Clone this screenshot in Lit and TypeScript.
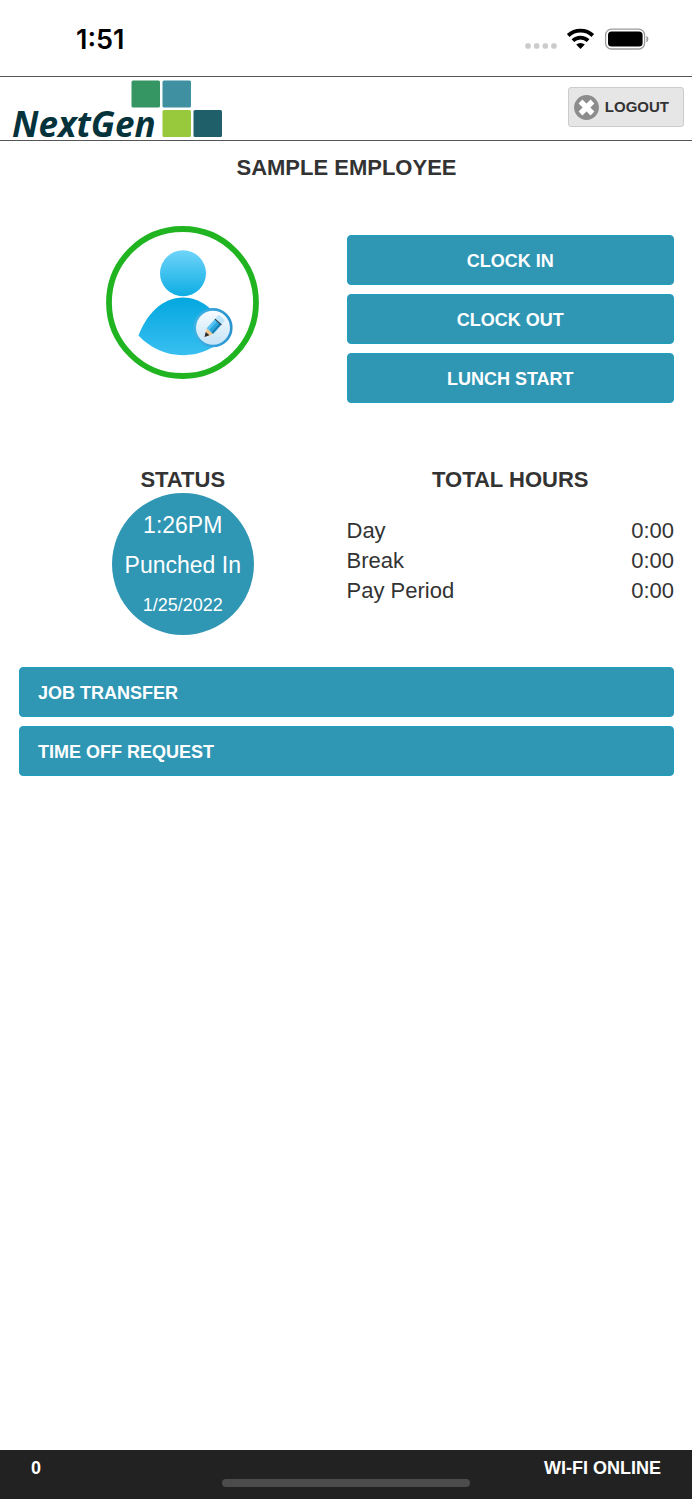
import { LitElement, html, css, svg } from "lit";
import { customElement, property } from "lit/decorators.js";

const COLORS = css`
  :host {
    --teal: #2f96b4;
    --teal-edge: #1f9fbc;
    --ink: #333333;
  }
`;

@customElement("phone-status")
class PhoneStatus extends LitElement {
  static styles = css`
    :host {
      display: flex;
      align-items: center;
      justify-content: space-between;
      height: 76px;
      padding: 0 43px 0 76px;
      box-sizing: border-box;
    }
    .time {
      font: 600 27px/32px Inter, sans-serif;
      color: #000;
      padding-top: 4px;
    }
    .glyphs {
      display: block;
      width: 124px;
      height: 22px;
      padding-top: 2px;
    }
  `;

  render() {
    return html`
      <span class="time">1:51</span>
      <svg class="glyphs" viewBox="0 0 124 22" role="img" aria-label="No signal, Wi-Fi, battery full">
        ${[0, 1, 2, 3].map(
          (i) => svg`<rect x=${0.2 + i * 8.65} y="15.2" width="5.6" height="5.6" rx="2.2" fill="#cbcbcb" />`
        )}
        <g fill="none" stroke="#000" stroke-width="3.8">
          <path d="M43.2 7.5a18 18 0 0 1 24.6 0" />
          <path d="M47.9 12.6a11 11 0 0 1 15.2 0" />
        </g>
        <path d="M51.2 16.6a6.4 6.4 0 0 1 8.6 0L55.5 21z" fill="#000" />
        <rect x="80.6" y="1.2" width="39" height="19.8" rx="5.8" fill="none" stroke="#9b9b9b" stroke-width="1.3" />
        <rect x="83" y="3.6" width="34.6" height="15" rx="3.6" fill="#000" />
        <path d="M121.4 8c2.6.8 2.6 5.4 0 6.2z" fill="#9b9b9b" />
      </svg>
    `;
  }
}

@customElement("brand-bar")
class BrandBar extends LitElement {
  static styles = css`
    :host {
      display: flex;
      align-items: flex-start;
      justify-content: space-between;
      height: 65px;
      box-sizing: border-box;
      border-top: 1px solid #555;
      border-bottom: 1px solid #555;
      padding: 0 8px 0 12px;
    }
    .logo {
      display: flex;
      align-items: flex-end;
      height: 61px;
    }
    .name {
      font: italic 700 35px/36px "Open Sans", "Noto Sans", sans-serif;
      color: #04333c;
      margin-bottom: -4px;
    }
    .tiles {
      display: block;
      width: 92px;
      height: 58px;
      margin-left: -25px;
    }
    .logout {
      display: flex;
      align-items: center;
      gap: 6px;
      height: 40px;
      margin-top: 10px;
      padding: 0 14px 0 5px;
      border: 1px solid #ccc;
      border-radius: 3px;
      background: #e6e6e6;
      color: #333;
      font: 700 15px/20px "Liberation Sans", Arial, sans-serif;
    }
    .cross {
      display: block;
      width: 25px;
      height: 25px;
    }
  `;

  render() {
    return html`
      <div class="logo">
        <span class="name">NextGen</span>
        <svg class="tiles" viewBox="0 0 92 58" aria-hidden="true">
          <rect x="0.5" y="0.5" width="28.5" height="27" rx="1.5" fill="#359664" />
          <rect x="31.5" y="0.5" width="28.5" height="27" rx="1.5" fill="#3f91a1" />
          <rect x="31.5" y="30" width="28.5" height="27" rx="1.5" fill="#98c93c" />
          <rect x="62.5" y="30" width="28.5" height="27" rx="1.5" fill="#1f5f69" />
        </svg>
      </div>
      <button class="logout" type="button">
        <svg class="cross" viewBox="0 0 25 25" aria-hidden="true">
          <circle cx="12.5" cy="12.5" r="12.4" fill="#8c8c8c" />
          <path d="M6.5 6.5l12 12M18.5 6.5l-12 12" stroke="#fff" stroke-width="5.4" />
        </svg>
        LOGOUT
      </button>
    `;
  }
}

@customElement("employee-avatar")
class EmployeeAvatar extends LitElement {
  static styles = css`
    :host {
      display: block;
      width: 153px;
      height: 153px;
    }
    .edit {
      display: block;
      padding: 0;
      border: 0;
      border-radius: 50%;
      background: none;
    }
    .art {
      display: block;
      width: 153px;
      height: 153px;
    }
  `;

  render() {
    return html`
      <button class="edit" type="button" aria-label="Edit profile">
        <svg class="art" viewBox="0 0 153 153">
          <defs>
            <linearGradient id="head" x1="0" y1="0" x2="0" y2="1">
              <stop offset="0" stop-color="#6fd4fa" />
              <stop offset="1" stop-color="#0eade3" />
            </linearGradient>
            <linearGradient id="torso" x1="0" y1="0" x2="0" y2="1">
              <stop offset="0" stop-color="#04a7e0" />
              <stop offset="1" stop-color="#38bff0" />
            </linearGradient>
            <linearGradient id="badge" x1="0" y1="0" x2="0" y2="1">
              <stop offset="0" stop-color="#fafdff" />
              <stop offset="1" stop-color="#c3e2f6" />
            </linearGradient>
            <linearGradient id="ring" x1="0" y1="0" x2="1" y2="0">
              <stop offset="0" stop-color="#3cb2e4" />
              <stop offset="1" stop-color="#2b93cf" />
            </linearGradient>
          </defs>
          <circle cx="76.5" cy="76.5" r="73.5" fill="#fff" stroke="#21b421" stroke-width="5.8" />
          <circle cx="77" cy="47.3" r="23" fill="url(#head)" />
          <path
            d="M32.5 109.5C40 89 56 71.5 77 71.5C98 71.5 114 89 121.5 109.5C110 122 94 129.2 77 129.2C60 129.2 44 122 32.5 109.5Z"
            fill="url(#torso)"
          />
          <circle cx="107" cy="101.7" r="18.3" fill="url(#badge)" stroke="url(#ring)" stroke-width="2.6" />
          <g transform="translate(98.5 111) rotate(-48)">
            <path d="M0 0L8 -4.3V4.3Z" fill="#efc690" />
            <path d="M0 0L4.6 -2.5V2.5Z" fill="#2b2b2b" />
            <rect x="8" y="-4.3" width="12.5" height="2.9" fill="#55c4f1" />
            <rect x="8" y="-1.4" width="12.5" height="2.9" fill="#27a7e0" />
            <rect x="8" y="1.5" width="12.5" height="2.8" fill="#1585ba" />
            <rect x="19.8" y="-4.3" width="1.3" height="8.6" fill="#2a4556" />
            <rect x="21.1" y="-4.3" width="5" height="8.6" rx="1.2" fill="#bce4fa" />
          </g>
        </svg>
      </button>
    `;
  }
}

@customElement("action-button")
class ActionButton extends LitElement {
  @property() label = "";
  @property({ reflect: true }) align = "center";

  static styles = [
    COLORS,
    css`
      :host {
        display: block;
      }
      .action {
        display: block;
        width: 100%;
        box-sizing: border-box;
        padding: 15px 18px 13px;
        border: 1px solid var(--teal-edge);
        border-radius: 4px;
        background: var(--teal);
        color: #fff;
        font: 700 18px/20px "Liberation Sans", Arial, sans-serif;
        text-align: center;
      }
      :host([align="left"]) .action {
        text-align: left;
      }
    `,
  ];

  render() {
    return html`<button class="action" type="button">${this.label}</button>`;
  }
}

@customElement("app-root")
class AppRoot extends LitElement {
  static styles = [
    COLORS,
    css`
      :host {
        display: flex;
        flex-direction: column;
        min-height: 100vh;
        box-sizing: border-box;
        padding: 0 1px 1px 0;
        background: #fff;
        color: var(--ink);
        font: 400 22px/30px "Liberation Sans", Arial, sans-serif;
      }
      .main {
        flex: 1;
        padding: 12px 18px 0 19px;
      }
      .heading {
        margin: 0;
        font-size: 22px;
        line-height: 30px;
        font-weight: 700;
        text-align: center;
      }
      .halves {
        display: grid;
        grid-template-columns: 1fr 1fr;
      }
      .clock {
        padding-top: 43px;
      }
      .left {
        display: flex;
        flex-direction: column;
        align-items: center;
      }
      .stack {
        display: grid;
        gap: 9px;
      }
      .punches {
        padding-top: 9px;
      }
      .summary {
        padding-top: 62px;
      }
      .disc {
        display: flex;
        flex-direction: column;
        align-items: center;
        box-sizing: border-box;
        width: 142px;
        height: 142px;
        padding-top: 12px;
        margin-top: -2px;
        border-radius: 50%;
        background: var(--teal);
        color: #fff;
        font-size: 23px;
        line-height: 40px;
        white-space: nowrap;
      }
      .date {
        font-size: 18px;
      }
      .hours {
        width: 100%;
        margin-top: 21px;
        border-collapse: collapse;
      }
      .hours th,
      .hours td {
        padding: 0;
        font-weight: 400;
        text-align: left;
      }
      .hours td {
        text-align: right;
      }
      .links {
        padding-top: 32px;
      }
      .foot {
        position: relative;
        display: flex;
        justify-content: space-between;
        box-sizing: border-box;
        height: 49px;
        padding: 8px 31px 0;
        background: #222;
        color: #fff;
        font-size: 18px;
        line-height: 20px;
        font-weight: 700;
      }
      .home {
        position: absolute;
        left: 50%;
        bottom: 12px;
        width: 248px;
        height: 8px;
        transform: translateX(-50%);
        border-radius: 4px;
        background: #4c4c4c;
      }
    `,
  ];

  private hours = [
    ["Day", "0:00"],
    ["Break", "0:00"],
    ["Pay Period", "0:00"],
  ];

  render() {
    return html`
      <phone-status></phone-status>
      <brand-bar></brand-bar>
      <main class="main">
        <h1 class="heading">SAMPLE EMPLOYEE</h1>
        <section class="halves clock">
          <div class="left"><employee-avatar></employee-avatar></div>
          <div class="stack punches">
            <action-button label="CLOCK IN"></action-button>
            <action-button label="CLOCK OUT"></action-button>
            <action-button label="LUNCH START"></action-button>
          </div>
        </section>
        <section class="halves summary">
          <div class="left">
            <h2 class="heading">STATUS</h2>
            <div class="disc">
              <span>1:26PM</span>
              <span>Punched In</span>
              <span class="date">1/25/2022</span>
            </div>
          </div>
          <div>
            <h2 class="heading">TOTAL HOURS</h2>
            <table class="hours">
              ${this.hours.map(([name, total]) => html`<tr><th scope="row">${name}</th><td>${total}</td></tr>`)}
            </table>
          </div>
        </section>
        <nav class="stack links">
          <action-button align="left" label="JOB TRANSFER"></action-button>
          <action-button align="left" label="TIME OFF REQUEST"></action-button>
        </nav>
      </main>
      <footer class="foot">
        <span>0</span>
        <span>WI-FI ONLINE</span>
        <div class="home"></div>
      </footer>
    `;
  }
}
